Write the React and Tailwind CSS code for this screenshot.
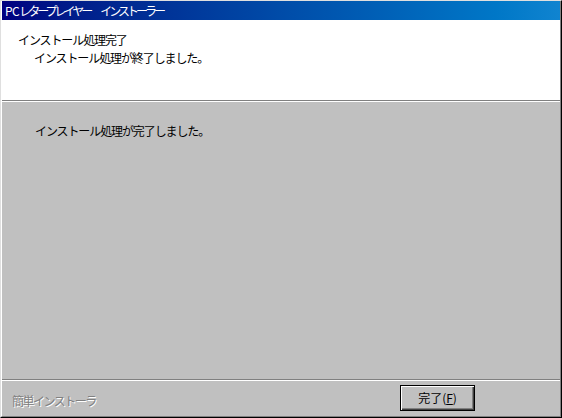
export default function App() {
  const font = { fontFamily: '"Noto Sans CJK JP", "Noto Sans", sans-serif' };
  return (
    <div
      className="w-[562px] h-[418px] flex flex-col bg-[#c0c0c0] border border-t-[#dfdfdf] border-l-[#dfdfdf] border-r-[#000000] border-b-[#000000] text-[12px] tracking-[-1.1px] text-black"
      style={font}
    >
      <div className="flex-1 flex flex-col border-l border-r border-b border-l-white border-r-[#808080] border-b-[#808080]">
        <div className="h-[19px] flex items-center pl-[3px] bg-gradient-to-r from-[#000080] to-[#1084d0] text-white leading-none tracking-[-3px]">
          <span className="tracking-[-0.5px]">PC</span>
          <span>レタープレイヤー</span>
          <span className="ml-[10px]">インストーラー</span>
        </div>
        <div className="h-[80px] bg-white pt-[11px] leading-[18px]">
          <div className="pl-[16px]">インストール処理完了</div>
          <div className="pl-[32px]">インストール処理が終了しました。</div>
        </div>
        <div className="h-[2px] border-t border-b border-t-[#808080] border-b-white" />
        <div className="flex-1 pt-[20px] pl-[33px] leading-[18px]">
          インストール処理が完了しました。
        </div>
        <div className="h-[2px] border-t border-b border-t-[#808080] border-b-white" />
        <div className="h-[35px] flex items-start pl-[10px] pr-[85px]">
          <div className="flex-1 pt-[11px] leading-[18px] tracking-[-1.5px] text-[#808080] [text-shadow:1px_1px_0_#ffffff]">
            簡単インストーラ
          </div>
          <button className="mt-[4px] w-[75px] h-[26px] border border-black bg-[#c0c0c0] shadow-[inset_1px_1px_0_#ffffff,inset_-1px_-1px_0_#404040,inset_-2px_-2px_0_#808080] flex items-center justify-center leading-none tracking-[0px] text-black">
            完了(<span className="underline">F</span>)
          </button>
        </div>
      </div>
    </div>
  );
}
